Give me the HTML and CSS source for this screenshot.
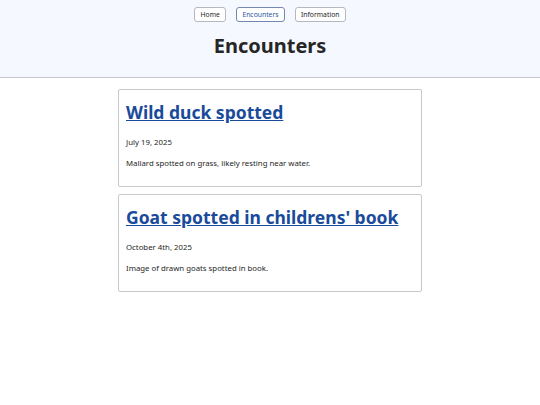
FILE: index.html
```html
<!DOCTYPE html>
<html lang="en">
<head>
    <meta charset="UTF-8">
    <meta name="viewport" content="width=device-width, initial-scale=1.0">
    <title>Encounters</title>
    <link rel="stylesheet" href="styles.css">
</head>
<body>
    <header class="site-header">
        <nav class="nav">
            <a class="nav-btn" href="#">Home</a>
            <a class="nav-btn active" href="#">Encounters</a>
            <a class="nav-btn" href="#">Information</a>
        </nav>
        <h1>Encounters</h1>
    </header>

    <main class="encounters">
        <article class="card">
            <h2><a href="#">Wild duck spotted</a></h2>
            <p class="date">July 19, 2025</p>
            <p class="desc">Mallard spotted on grass, likely resting near water.</p>
        </article>
        <article class="card">
            <h2><a href="#">Goat spotted in childrens' book</a></h2>
            <p class="date">October 4th, 2025</p>
            <p class="desc">Image of drawn goats spotted in book.</p>
        </article>
    </main>
</body>
</html>
```

FILE: styles.css
```css
body {
    font-family: 'Noto Sans', 'Open Sans', sans-serif;
    margin: 0;
    padding: 0;
    background: #fff;
    color: #262626;
}

.site-header {
    box-sizing: border-box;
    height: 78px;
    padding-top: 7px;
    background: #f5f8ff;
    border-bottom: 1px solid #c4c7cf;
    text-align: center;
}

.nav {
    display: flex;
    justify-content: center;
    gap: 9.5px;
}

.nav-btn {
    box-sizing: border-box;
    min-width: 32px;
    font-size: 6.8px;
    line-height: 13px;
    padding: 0 5.5px;
    border: 1px solid #b5b8c0;
    border-radius: 3px;
    background: #fff;
    color: #222;
    text-align: center;
    text-decoration: none;
}

.nav-btn.active {
    border-color: #7388b2;
    color: #2a54a0;
}

h1 {
    margin: 10px 0 0;
    font-size: 20px;
    line-height: 28px;
    font-weight: 700;
}

.encounters {
    width: 304px;
    margin: 11px auto 0;
    display: flex;
    flex-direction: column;
    gap: 7px;
}

.card {
    border: 1px solid #c8c9cd;
    border-radius: 2px;
    padding: 10px 7px 17px;
}

.card h2 {
    margin: 0 0 13px;
    font-size: 17.5px;
    line-height: 24px;
}

.card h2 a {
    color: #1a4a9a;
}

.date, .desc {
    font-size: 7.8px;
    line-height: 11px;
}

.date {
    margin: 0 0 10px;
}

.desc {
    margin: 0;
}
```
